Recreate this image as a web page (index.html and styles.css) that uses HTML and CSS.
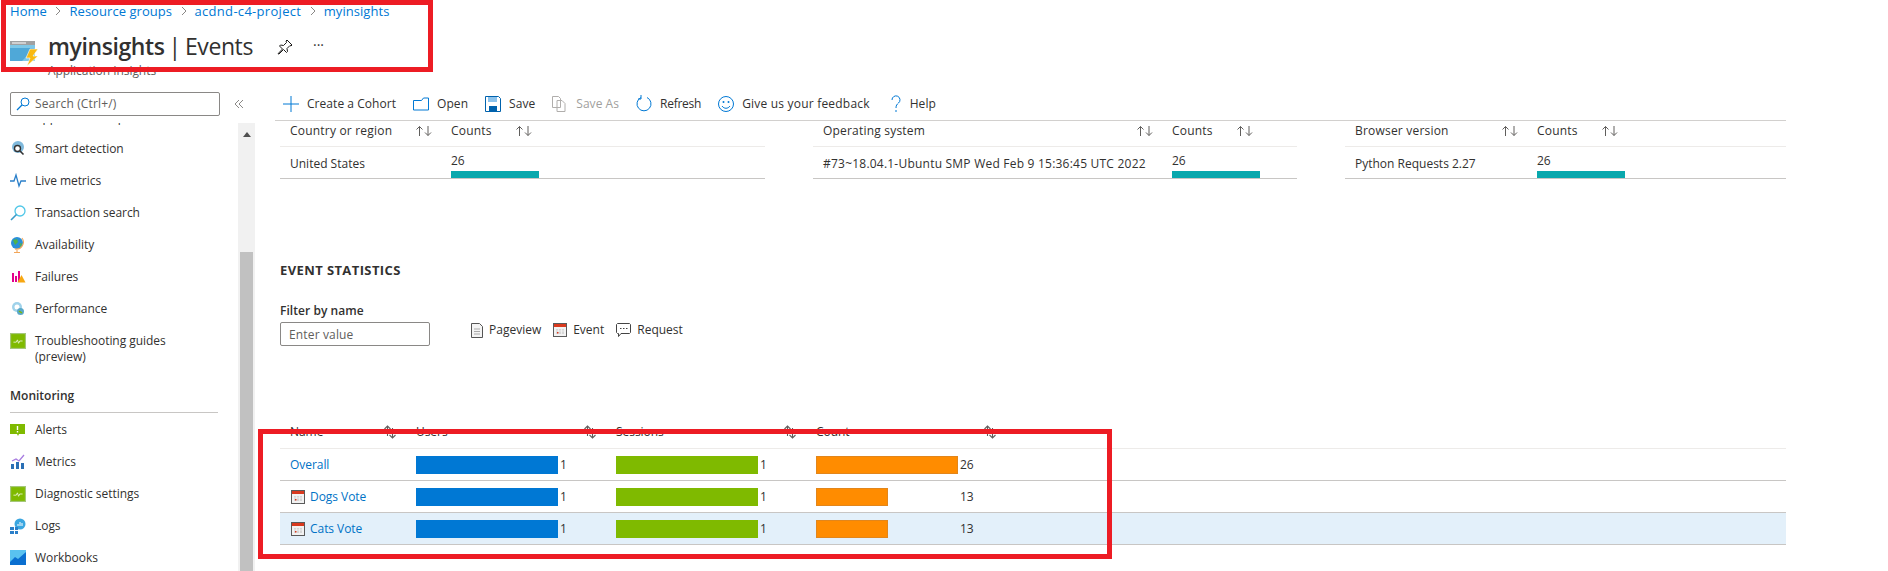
FILE: index.html
```html
<!DOCTYPE html>
<html lang="en">
<head>
<meta charset="utf-8">
<title>myinsights | Events</title>
<link rel="stylesheet" href="styles.css">
</head>
<body>
<svg class="defs" width="0" height="0" aria-hidden="true">
  <symbol id="sort" viewBox="0 0 18 12">
    <path d="M4.5 11V1.5M1.5 4.5l3-3 3 3M13 1v9.5M10 7.5l3 3 3-3" fill="none" stroke="#605e5c" stroke-width="1"/>
  </symbol>
  <symbol id="sort-tight" viewBox="0 0 16 16">
    <path d="M5.500 12V2M2.500 5l3-3 3 3M10.500 4v10M7.500 11l3 3 3-3" fill="none" stroke="#605e5c" stroke-width="1.100"/>
  </symbol>
  <symbol id="cal" viewBox="0 0 14 14">
    <rect x=".5" y=".5" width="13" height="13" fill="#f2f2f2" stroke="#5a5a5a"/>
    <rect x="1" y="1" width="12" height="3" fill="#d9391e"/>
    <path d="M3 6h8v5H3z" fill="#d6d6d6"/>
    <path d="M3 8h8M5.500 6v5M8.500 6v5" stroke="#f2f2f2" stroke-width=".8"/>
    <rect x="4" y="9" width="1.500" height="1.500" fill="#d9391e"/>
  </symbol>
  <symbol id="guide" viewBox="0 0 14 14">
    <rect x=".5" y=".5" width="13" height="13" fill="#7fba00" stroke="#a5c77a"/>
    <path d="M3 8h2.500l1-2 1 3 1-2H11" fill="none" stroke="#e6f2cc" stroke-width=".8"/>
  </symbol>
</svg>

<header class="page-head">
  <nav class="crumbs">
    <a>Home</a><span class="sep"><svg width="6" height="10" viewBox="0 0 6 10"><path d="M1 1l4 4-4 4" fill="none" stroke="#8a8886"/></svg></span>
    <a>Resource groups</a><span class="sep"><svg width="6" height="10" viewBox="0 0 6 10"><path d="M1 1l4 4-4 4" fill="none" stroke="#8a8886"/></svg></span>
    <a class="wide">acdnd-c4-project</a><span class="sep"><svg width="6" height="10" viewBox="0 0 6 10"><path d="M1 1l4 4-4 4" fill="none" stroke="#8a8886"/></svg></span>
    <a>myinsights</a>
  </nav>
  <div class="title-row">
    <svg class="res-icon" width="29" height="27" viewBox="0 0 29 27">
      <rect x="0" y="1" width="25" height="20" rx="1" fill="#7ec8e8"/>
      <path d="M0 21V8h25L12 21z" fill="#4fa8d8"/>
      <rect x="0" y="1" width="25" height="4" fill="#a0a1a2"/>
      <rect x="2" y="2.500" width="14" height="1" fill="#fff"/>
      <path d="M20 9h8l-5 7h5L17 26l3-8h-4z" fill="#f8b912" stroke="#fff" stroke-width=".6"/>
    </svg>
    <div class="title-text">
      <h1><b>myinsights</b> | Events</h1>
      <div class="subtitle">Application Insights</div>
    </div>
    <svg class="pin" width="16" height="16" viewBox="0 0 16 16"><path d="M10 1l5 5-1 1-1-.5-3 3 .5 3-1 1-3-3L2 15l-1-.2L5.500 10l-3-3 1-1 3 .5 3-3L9 2z" fill="#fff" stroke="#1b1a19"/></svg>
    <span class="more">···</span>
  </div>
</header>

<div class="body-row">
  <aside class="side">
    <div class="side-top">
      <div class="search">
        <svg width="14" height="14" viewBox="0 0 14 14"><circle cx="9" cy="5" r="4" fill="none" stroke="#0078d4"/><path d="M6 8l-5 5" stroke="#0078d4" stroke-width="1.200"/></svg>
        <span>Search (Ctrl+/)</span>
      </div>
      <svg class="collapse" width="10" height="10" viewBox="0 0 10 10"><path d="M5 1L1 5l4 4M9 1L5 5l4 4" fill="none" stroke="#8a8886"/></svg>
    </div>
    <div class="side-scroll">
      <div class="nav">
        <div class="clipped"><span>Application map</span></div>
        <div class="nav-item">
          <svg width="16" height="16" viewBox="0 0 16 16"><circle cx="8" cy="6" r="6" fill="#7fb9dc"/><circle cx="7.500" cy="7.500" r="3" fill="#fff" stroke="#333" stroke-width="1.400"/><path d="M10 10l3.500 3.500" stroke="#333" stroke-width="1.600"/></svg>
          <span>Smart detection</span>
        </div>
        <div class="nav-item">
          <svg width="16" height="16" viewBox="0 0 16 16"><path d="M0 8h4l2-6 3 11 2-5h5" fill="none" stroke="#2a7fc9" stroke-width="1.300"/></svg>
          <span>Live metrics</span>
        </div>
        <div class="nav-item">
          <svg width="16" height="16" viewBox="0 0 16 16"><circle cx="10" cy="6" r="5" fill="#fff" stroke="#50c7e8" stroke-width="1.300"/><path d="M6.500 9.500L1 15" stroke="#3a9bc8" stroke-width="1.600"/></svg>
          <span>Transaction search</span>
        </div>
        <div class="nav-item">
          <svg width="16" height="16" viewBox="0 0 16 16"><circle cx="7" cy="6" r="6" fill="#2a8fd8"/><path d="M3 3l4-1 1 3-3 3zM9 7l3-1-1 4z" fill="#4fb34a"/><path d="M12 1a7 7 0 0 1-7 11M7 13v2M4 15.500h6" fill="none" stroke="#f2a65a" stroke-width="1.100"/></svg>
          <span>Availability</span>
        </div>
        <div class="nav-item">
          <svg width="16" height="16" viewBox="0 0 16 16"><path d="M2 4h2v9H2zM5 7h2v6H5zM8 2h2v11H8z" fill="#e3008c"/><path d="M11.500 6l4 7.500h-8z" fill="#f7a711"/></svg>
          <span>Failures</span>
        </div>
        <div class="nav-item">
          <svg width="16" height="16" viewBox="0 0 16 16"><circle cx="7" cy="6" r="5" fill="#9fd2ea"/><circle cx="7" cy="6" r="2.500" fill="#fff"/><circle cx="10.500" cy="10.500" r="3.500" fill="#59a8c9"/><path d="M9 10l3 2" stroke="#7fba00" stroke-width="1.500"/></svg>
          <span>Performance</span>
        </div>
        <div class="nav-item tall">
          <svg width="14" height="16" viewBox="0 0 14 14"><use href="#guide"/></svg>
          <span>Troubleshooting guides (preview)</span>
        </div>
        <div class="nav-head">Monitoring</div>
        <div class="nav-item">
          <svg width="16" height="16" viewBox="0 0 16 16"><path d="M0 2h15v10H9l-1 2-1-2H0z" fill="#7fba00"/><path d="M7.500 4v4M7.500 9v1.500" stroke="#fff" stroke-width="1.400"/></svg>
          <span>Alerts</span>
        </div>
        <div class="nav-item">
          <svg width="16" height="16" viewBox="0 0 16 16"><path d="M1 10h3v5H1zM6 8h3v7H6zM11 9h3v6h-3z" fill="#2a6fb5"/><path d="M2 7l4-2 3 2 5-6" fill="none" stroke="#a77be0" stroke-width="1.300"/></svg>
          <span>Metrics</span>
        </div>
        <div class="nav-item">
          <svg width="14" height="16" viewBox="0 0 14 14"><use href="#guide"/></svg>
          <span>Diagnostic settings</span>
        </div>
        <div class="nav-item">
          <svg width="16" height="16" viewBox="0 0 16 16"><circle cx="10" cy="6" r="5.500" fill="#3aa6e0"/><path d="M8 8V6M10 8V4M12 8V5" stroke="#fff"/><path d="M0 9h4v3H0zM5 9h3v3H5zM0 13h4v3H0zM5 13h3v3H5z" fill="#2a7fc9"/></svg>
          <span>Logs</span>
        </div>
        <div class="nav-item">
          <svg width="16" height="16" viewBox="0 0 16 16"><rect width="16" height="15" fill="#59c2f0"/><path d="M0 15v-3l5-5 3 2 8-7v13z" fill="#0a6fd0"/></svg>
          <span>Workbooks</span>
        </div>
      </div>
      <div class="scrollbar">
        <div class="arrow"></div>
        <div class="thumb"></div>
      </div>
    </div>
  </aside>

  <main class="main">
    <div class="toolbar">
      <span class="tool"><svg width="16" height="16" viewBox="0 0 16 16"><path d="M8 0v16M0 8h16" stroke="#0078d4"/></svg>Create a Cohort</span>
      <span class="tool"><svg width="16" height="14" viewBox="0 0 16 14"><path d="M.5 3.500h8l2-2.500h5v12H.500z" fill="none" stroke="#0078d4"/></svg>Open</span>
      <span class="tool"><svg width="16" height="16" viewBox="0 0 16 16"><path d="M.500.500h13l2 2v13H.500z" fill="#fff" stroke="#0062ad"/><path d="M3 1h9v5H3z" fill="#8dc3ec"/><path d="M4 10h8v5H4z" fill="#0062ad"/></svg>Save</span>
      <span class="tool off"><svg width="16" height="16" viewBox="0 0 16 16"><path d="M.500.500h6l2 2v9h-8zM5 4.500h5l3 3v8H5z" fill="#fff" stroke="#b0aeac"/></svg>Save As</span>
      <span class="tool refresh"><svg width="16" height="18" viewBox="0 0 16 18"><path d="M5 2.500a7 7 0 1 0 6 0" fill="none" stroke="#0078d4"/><path d="M5 0v4l-3 0" fill="none" stroke="#0078d4"/></svg>Refresh</span>
      <span class="tool feedback"><svg width="16" height="16" viewBox="0 0 16 16"><circle cx="8" cy="8" r="7.500" fill="none" stroke="#0078d4"/><circle cx="5.500" cy="6" r="1" fill="#0078d4"/><circle cx="10.500" cy="6" r="1" fill="#0078d4"/><path d="M4 10c2 3 6 3 8 0" fill="none" stroke="#0078d4"/></svg>Give us your feedback</span>
      <span class="tool help"><svg width="12" height="18" viewBox="0 0 10 18"><path d="M1 5a4 4 0 1 1 6.500 3C6 9.500 5 10 5 13M5 15v2" fill="none" stroke="#0078d4"/></svg>Help</span>
    </div>

    <section class="tops">
      <div class="mini t1">
        <div class="mini-head">
          <span class="c-a">Country or region</span>
          <svg class="s" width="18" height="12"><use href="#sort"/></svg>
          <span class="c-b">Counts</span>
          <svg class="s" width="18" height="12"><use href="#sort"/></svg>
        </div>
        <div class="mini-row">
          <span class="c-a">United States</span>
          <div class="c-b cnt"><span>26</span><i class="teal"></i></div>
        </div>
      </div>
      <div class="mini t2">
        <div class="mini-head">
          <span class="c-a">Operating system</span>
          <svg class="s" width="18" height="12"><use href="#sort"/></svg>
          <span class="c-b">Counts</span>
          <svg class="s" width="18" height="12"><use href="#sort"/></svg>
        </div>
        <div class="mini-row">
          <span class="c-a os">#73~18.04.1-Ubuntu SMP Wed Feb 9 15:36:45 UTC 2022</span>
          <div class="c-b cnt"><span>26</span><i class="teal"></i></div>
        </div>
      </div>
      <div class="mini t3">
        <div class="mini-head">
          <span class="c-a">Browser version</span>
          <svg class="s" width="18" height="12"><use href="#sort"/></svg>
          <span class="c-b">Counts</span>
          <svg class="s" width="18" height="12"><use href="#sort"/></svg>
        </div>
        <div class="mini-row">
          <span class="c-a">Python Requests 2.27</span>
          <div class="c-b cnt"><span>26</span><i class="teal"></i></div>
        </div>
      </div>
    </section>

    <h2 class="sec-title">EVENT STATISTICS</h2>

    <section class="filter-row">
      <div class="filter">
        <label class="filter-label">Filter by name</label>
        <div class="input">Enter value</div>
      </div>
      <div class="legend">
        <span class="leg"><svg width="12" height="15" viewBox="0 0 12 15"><path d="M.500.500h8l3 3v11H.500z" fill="#f4f4f4" stroke="#555"/><path d="M3 6h6M3 8.500h6M3 11h6" stroke="#aaa"/></svg>Pageview</span>
        <span class="leg"><svg width="14" height="14"><use href="#cal"/></svg>Event</span>
        <span class="leg"><svg width="15" height="15" viewBox="0 0 15 15"><path d="M1.500.500h12l1 1v8l-1 1H5l-2.500 3v-3h-1l-1-1v-8z" fill="#fff" stroke="#444"/><path d="M4 5.500h1.500M7 5.500h1.500M10 5.500h1.500" stroke="#444"/></svg>Request</span>
      </div>
    </section>

    <section class="stats">
      <div class="srow shead">
        <div class="name"><span>Name</span><svg width="16" height="16"><use href="#sort-tight"/></svg></div>
        <div class="metric"><span>Users</span><svg width="16" height="16"><use href="#sort-tight"/></svg></div>
        <div class="metric"><span>Sessions</span><svg width="16" height="16"><use href="#sort-tight"/></svg></div>
        <div class="metric"><span>Count</span><svg width="16" height="16"><use href="#sort-tight"/></svg></div>
      </div>
      <div class="srow">
        <div class="name"><a>Overall</a></div>
        <div class="metric"><i class="bar blue"></i><b>1</b></div>
        <div class="metric"><i class="bar green"></i><b>1</b></div>
        <div class="metric"><i class="bar orange"></i><b>26</b></div>
      </div>
      <div class="srow">
        <div class="name"><svg width="14" height="14"><use href="#cal"/></svg><a>Dogs Vote</a></div>
        <div class="metric"><i class="bar blue"></i><b>1</b></div>
        <div class="metric"><i class="bar green"></i><b>1</b></div>
        <div class="metric"><i class="bar orange half"></i><b>13</b></div>
      </div>
      <div class="srow sel">
        <div class="name"><svg width="14" height="14"><use href="#cal"/></svg><a>Cats Vote</a></div>
        <div class="metric"><i class="bar blue"></i><b>1</b></div>
        <div class="metric"><i class="bar green"></i><b>1</b></div>
        <div class="metric"><i class="bar orange half"></i><b>13</b></div>
      </div>
    </section>
  </main>
</div>

<div class="mark mark-head"></div>
<div class="mark mark-table"></div>
</body>
</html>
```
FILE: styles.css
```css
* { box-sizing: border-box; }
html, body { margin: 0; height: 571px; overflow: hidden; }
body {
  position: relative;
  background: #fff;
  color: #323130;
  font: 12px/16px "Open Sans", "Noto Sans", sans-serif;
  letter-spacing: -0.05px;
}
.defs { position: absolute; }
a { color: #0072c6; }

.page-head { height: 85px; padding: 3px 0 0 10px; overflow: hidden; }
.crumbs { display: flex; align-items: center; height: 16px; font-size: 13px; letter-spacing: 0.05px; }
.crumbs a { color: #0078d4; }
.crumbs .wide { letter-spacing: 0.3px; }
.sep { display: flex; margin: 0 8px 0 8.5px; }
.title-row { display: flex; align-items: flex-start; margin-top: 11px; }
.res-icon { margin-top: 10px; }
.title-text { margin-left: 9px; width: 229px; }
h1 { margin: 0; font-size: 23px; line-height: 32px; font-weight: 400; letter-spacing: -0.4px; word-spacing: -1.5px; white-space: nowrap; }
h1 b { font-weight: 600; }
.subtitle { font-size: 12px; line-height: 16px; color: #605e5c; margin-top: 1px; }
.pin { margin-top: 9px; }
.more { margin: 7px 0 0 20px; font-size: 14px; letter-spacing: 0; color: #323130; }

.body-row { display: flex; height: 486px; }
.side { width: 255px; flex: none; display: flex; flex-direction: column; }
.side-top { display: flex; align-items: center; height: 38px; padding: 7px 0 7px 10px; }
.search {
  display: flex; align-items: center; gap: 5px;
  width: 210px; height: 24px; padding-left: 5px;
  border: 1px solid #8a8886; border-radius: 2px; color: #605e5c;
  letter-spacing: 0.15px;
}
.collapse { margin-left: 14px; }
.side-scroll { flex: 1; display: flex; min-height: 0; }
.nav { width: 238px; padding: 0 20px 0 10px; overflow: hidden; }
.clipped { height: 10px; padding-left: 25px; overflow: hidden; }
.clipped span { display: block; margin-top: -13px; }
.nav-item { display: flex; align-items: center; gap: 9px; min-height: 32px; }
.nav-item svg { width: 16px; flex: none; }
.nav-item.tall { align-items: flex-start; height: 48px; padding-top: 8px; }
.nav-item.tall span { max-width: 150px; }
.nav-head { margin: 14px 0 1px; padding-bottom: 8px; border-bottom: 1px solid #c8c6c4; font-weight: 600; line-height: 17px; letter-spacing: 0; }
.scrollbar { width: 17px; background: #f1f1f1; padding: 0 2px; display: flex; flex-direction: column; }
.arrow { align-self: center; margin-top: 9px; border: 4px solid transparent; border-top: 0; border-bottom: 5px solid #505050; }
.thumb { flex: 1; margin-top: 115px; background: #c1c1c1; }

.main { flex: 1; padding: 0 102px 0 20px; min-width: 0; }
.toolbar { display: flex; align-items: center; gap: 17px; height: 36px; padding: 2px 0 0 8px; border-bottom: 1px solid #d2d0ce; letter-spacing: 0.05px; }
.tool { display: flex; align-items: center; gap: 8px; white-space: nowrap; }
.tool.off { color: #a19f9d; }
.refresh { letter-spacing: -0.25px; }
.feedback { letter-spacing: 0.2px; }
.help { margin-left: 3px; }

.tops { display: flex; padding-left: 5px; }
.mini { flex: none; }
.t1 { width: 485px; margin-right: 48px; }
.t2 { width: 484px; margin-right: 48px; }
.t3 { width: 441px; }
.mini-head, .mini-row { display: flex; align-items: center; }
.mini-head { height: 26px; padding-bottom: 5px; border-bottom: 1px solid #edebe9; font-weight: 500; letter-spacing: 0.2px; }
.mini-row { height: 32px; border-bottom: 1px solid #c8c6c4; letter-spacing: 0; }
.c-a { padding-left: 10px; white-space: nowrap; flex: none; }
.c-b { flex: none; }
.os { letter-spacing: 0.22px; }
.mini-head .c-b { width: 64px; }
.t1 .mini-head .c-a { width: 135px; }
.t2 .mini-head .c-a { width: 323px; }
.t3 .mini-head .c-a { width: 156px; }
.mini-head .s { margin-right: 18px; flex: none; }
.mini-head .s:last-child { margin-right: 0; }
.t1 .mini-row .c-a { width: 171px; }
.t2 .mini-row .c-a { width: 359px; }
.t3 .mini-row .c-a { width: 192px; }
.mini-row { align-items: stretch; }
.mini-row .c-a { align-self: center; padding-top: 2px; }
.cnt { display: flex; flex-direction: column; justify-content: flex-end; line-height: 14px; }
.teal { display: block; width: 88px; height: 7px; background: #09a8ad; margin-top: 3px; }

.sec-title { margin: 0; padding: 82px 0 0 5px; font-size: 13px; line-height: 18px; font-weight: 700; letter-spacing: 0.4px; }
.filter-row { display: flex; align-items: flex-end; padding: 24px 0 0 5px; }
.filter { width: 191px; }
.filter-label { display: block; font-weight: 600; line-height: 16px; letter-spacing: 0.05px; margin-bottom: 3px; }
.input { width: 150px; height: 24px; padding: 4px 8px 2px; border: 1px solid #8a8886; border-radius: 2px; color: #605e5c; letter-spacing: 0.15px; }
.legend { display: flex; gap: 12px; padding-bottom: 8px; letter-spacing: 0; }
.leg { display: flex; align-items: center; gap: 6px; }

.stats { margin-top: 71px; padding-left: 5px; }
.srow { display: flex; height: 32px; padding: 1px 0 0 10px; border-bottom: 1px solid #c8c6c4; align-items: center; }
.srow.shead { padding: 1px 0 3px 10px; border-bottom-color: #edebe9; }
.sel { background: #e3f0fa; }
.name { width: 126px; display: flex; align-items: center; gap: 5px; flex: none; }
.name svg { margin-left: 1px; }
.metric { width: 200px; display: flex; align-items: center; flex: none; }
.shead .name, .shead .metric { justify-content: space-between; padding-right: 18px; }
.bar { display: block; width: 142px; height: 18px; flex: none; margin-right: 2px; }
.metric b { font-weight: 400; }
.blue { background: #0078d4; }
.green { background: #7fba00; }
.orange { background: #ff8c00; border: 1px solid #e2861b; }
.half { width: 72px; margin-right: 72px; }

.mark { position: absolute; border: 5px solid #ed1c24; pointer-events: none; }
.mark-head { left: 1px; top: 0; width: 432px; height: 72px; }
.mark-table { left: 258px; top: 429px; width: 854px; height: 130px; }
```
